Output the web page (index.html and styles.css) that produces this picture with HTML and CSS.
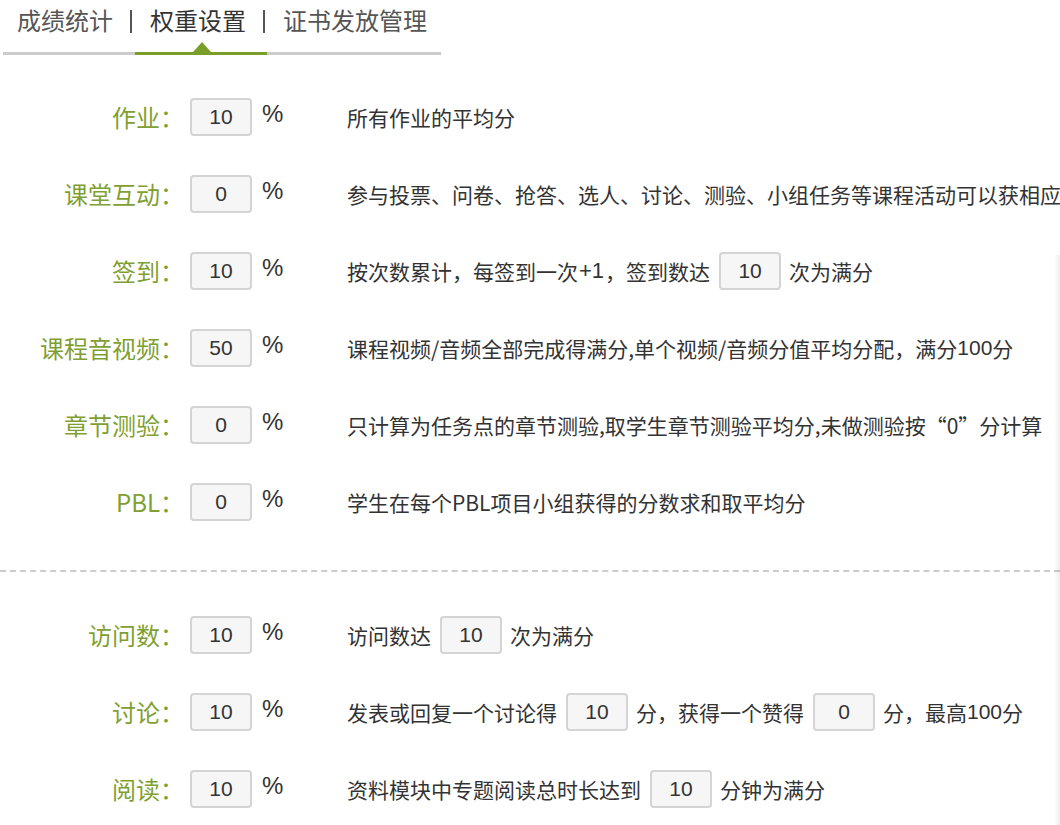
FILE: index.html
```html
<!DOCTYPE html>
<html lang="zh-CN">
<head>
<meta charset="utf-8">
<title>权重设置</title>
<link rel="stylesheet" href="styles.css">
</head>
<body>
<div class="page">
  <div class="tabs">
    <span class="tab tab-first">成绩统计</span>
    <span class="sep sep-1"></span>
    <span class="tab tab-active">权重设置</span>
    <span class="sep sep-2"></span>
    <span class="tab tab-last">证书发放管理</span>
  </div>

  <div class="section section-top">
    <div class="row">
      <span class="label">作业：</span>
      <span class="box">10</span>
      <span class="unit">%</span>
      <span class="desc">所有作业的平均分</span>
    </div>
    <div class="row">
      <span class="label">课堂互动：</span>
      <span class="box">0</span>
      <span class="unit">%</span>
      <span class="desc">参与投票、问卷、抢答、选人、讨论、测验、小组任务等课程活动可以获相应</span>
    </div>
    <div class="row">
      <span class="label">签到：</span>
      <span class="box">10</span>
      <span class="unit">%</span>
      <span class="desc">按次数累计，每签到一次<span class="lat plus">+1</span>，签到数达<span class="box inline">10</span>次为满分</span>
    </div>
    <div class="row">
      <span class="label">课程音视频：</span>
      <span class="box">50</span>
      <span class="unit">%</span>
      <span class="desc">课程视频/音频全部完成得满分,单个视频/音频分值平均分配，满分<span class="lat">100</span>分</span>
    </div>
    <div class="row">
      <span class="label">章节测验：</span>
      <span class="box">0</span>
      <span class="unit">%</span>
      <span class="desc">只计算为任务点的章节测验,取学生章节测验平均分,未做测验按“0”分计算</span>
    </div>
    <div class="row">
      <span class="label">PBL：</span>
      <span class="box">0</span>
      <span class="unit">%</span>
      <span class="desc">学生在每个PBL项目小组获得的分数求和取平均分</span>
    </div>
  </div>

  <div class="section section-bottom">
    <div class="row">
      <span class="label">访问数：</span>
      <span class="box">10</span>
      <span class="unit">%</span>
      <span class="desc">访问数达<span class="box inline">10</span>次为满分</span>
    </div>
    <div class="row">
      <span class="label">讨论：</span>
      <span class="box">10</span>
      <span class="unit">%</span>
      <span class="desc">发表或回复一个讨论得<span class="box inline">10</span>分，获得一个赞得<span class="box inline">0</span>分，最高<span class="lat">100</span>分</span>
    </div>
    <div class="row">
      <span class="label">阅读：</span>
      <span class="box">10</span>
      <span class="unit">%</span>
      <span class="desc">资料模块中专题阅读总时长达到<span class="box inline">10</span>分钟为满分</span>
    </div>
  </div>

  <div class="edge-shadow"></div>
</div>
</body>
</html>
```

FILE: styles.css
```css
html, body {
  margin: 0;
  padding: 0;
  background: #ffffff;
  overflow: hidden;
}

body {
  font-family: "Noto Sans CJK SC", "Liberation Sans", sans-serif;
  color: #333333;
}

.page {
  position: relative;
  width: 1060px;
  height: 825px;
  overflow: hidden;
}

/* ---------- tabs ---------- */
.tabs {
  display: flex;
  align-items: flex-start;
  width: 438px;
  height: 52px;
  margin-left: 3px;
  border-bottom: 3px solid #cccccc;
}

.tab {
  position: relative;
  display: block;
  height: 52px;
  font-size: 24px;
  line-height: 40px;
  color: #555555;
  white-space: nowrap;
}

.tab-first {
  padding-left: 14px;
}

.tab-active {
  padding: 0 17px 0 15px;
  color: #333333;
}

.tab-active::after {
  content: "";
  position: absolute;
  left: 0;
  right: -4px;
  bottom: -3px;
  height: 3px;
  background: #7a9e2a;
}

.tab-active::before {
  content: "";
  position: absolute;
  left: 58px;
  bottom: 0;
  width: 0;
  height: 0;
  border-left: 9px solid transparent;
  border-right: 9px solid transparent;
  border-bottom: 10px solid #7a9e2a;
}

.tab-last {
  padding-right: 14px;
}

.sep {
  display: block;
  width: 2px;
  height: 23px;
  margin-top: 10px;
  background: #555555;
}

.sep-1 {
  margin-left: 17px;
  margin-right: 3px;
}

.sep-2 {
  margin-right: 18px;
}

/* ---------- rows ---------- */
.section-top {
  padding-top: 43px;
  padding-bottom: 49px;
  border-bottom: 2px dashed #cccccc;
}

.section-bottom {
  padding-top: 44px;
}

.row {
  display: flex;
  align-items: center;
  height: 38px;
  margin-bottom: 39px;
  white-space: nowrap;
}

.section-top .row:last-child,
.section-bottom .row:last-child {
  margin-bottom: 0;
}

.label {
  flex: none;
  width: 184px;
  text-align: right;
  font-size: 24px;
  line-height: 38px;
  color: #7f9f33;
}

.box {
  flex: none;
  display: inline-block;
  box-sizing: border-box;
  width: 62px;
  height: 38px;
  margin-left: 6px;
  border: 2px solid #d4d4d4;
  border-radius: 4px;
  background: #f6f6f6;
  font-family: "Liberation Sans", "Noto Sans CJK SC", sans-serif;
  font-size: 21px;
  line-height: 34px;
  text-align: center;
  color: #333333;
}

.box.inline {
  margin: 0 8px 0 9px;
  vertical-align: middle;
}

.unit {
  flex: none;
  width: 85px;
  margin-left: 10px;
  font-family: "Liberation Sans", sans-serif;
  font-size: 24px;
  line-height: 38px;
  position: relative;
  top: -3px;
  color: #333333;
}

.desc {
  flex: none;
  display: flex;
  align-items: center;
  font-size: 21px;
  line-height: 38px;
  color: #333333;
}

.lat {
  font-family: "Liberation Sans", sans-serif;
}

.plus {
  padding: 0 1px;
  font-size: 22px;
}

/* faint panel edge on the right */
.edge-shadow {
  position: absolute;
  top: 255px;
  right: 0;
  bottom: 0;
  width: 6px;
  background: linear-gradient(to right, rgba(0, 0, 0, 0), rgba(0, 0, 0, 0.07));
}
```
